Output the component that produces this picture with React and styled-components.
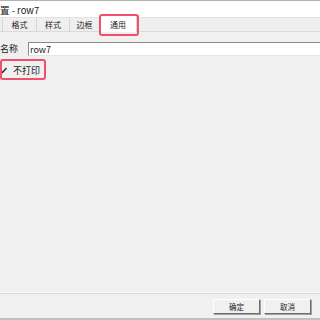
import React from "react";
import styled, { createGlobalStyle } from "styled-components";

const GlobalStyle = createGlobalStyle`
    html, body {
        margin: 0;
        padding: 0;
        width: 320px;
        height: 320px;
        overflow: hidden;
        background: #f0f0f0;
        font-family: "Noto Sans CJK SC", "Liberation Sans", sans-serif;
        font-size: 9px;
        color: #000;
    }
`;

const tabs = [
    { label: "格式", w: 34 },
    { label: "样式", w: 33 },
    { label: "边框", w: 30 },
    { label: "通用", w: 37, active: true },
];

function App() {
    return (
        <Window>
            <GlobalStyle />
            <TitleBar>置 - row7</TitleBar>
            <TabStrip>
                <Tab $w={3} />
                {tabs.map((t) => (
                    <Tab key={t.label} $w={t.w} $active={t.active}>
                        {t.label}
                        {t.active && <Mark $top={-1} $left={-1} $w={40} $h={22} />}
                    </Tab>
                ))}
            </TabStrip>
            <Panel>
                <FieldRow>
                    <Label>名称</Label>
                    <TextInput defaultValue="row7" />
                </FieldRow>
                <CheckRow>
                    <CheckBox>
                        <svg width="7" height="7" viewBox="0 0 7 7">
                            <path d="M0.5 3.5 L2.5 5.5 L6.5 1" fill="none" stroke="#222" strokeWidth="1.3" />
                        </svg>
                    </CheckBox>
                    <span>不打印</span>
                    <Mark $top={-7} $left={-6} $w={46} $h={21} />
                </CheckRow>
            </Panel>
            <Footer>
                <Button>确定</Button>
                <Button>取消</Button>
            </Footer>
            <BottomEdge />
        </Window>
    );
}

export default App;

const Window = styled.div`
    width: 320px;
    height: 320px;
    display: flex;
    flex-direction: column;
    background: #f0f0f0;
    border-top: 1px solid #b4b4b4;
    box-sizing: border-box;
`;

const TitleBar = styled.div`
    height: 16px;
    background: #fff;
    line-height: 18px;
    font-size: 9.5px;
    color: #222;
    white-space: nowrap;
`;

const TabStrip = styled.div`
    height: 13px;
    display: flex;
    background: #efefef;
    border-top: 1px solid #e2e2e2;
    border-bottom: 1px solid #dadada;
`;

const Tab = styled.div`
    position: relative;
    width: ${(p) => p.$w}px;
    flex: none;
    border-right: 1px solid #d6d6d6;
    background: ${(p) => (p.$active ? "#fff" : "transparent")};
    margin-top: ${(p) => (p.$active ? "-3px" : "0")};
    height: ${(p) => (p.$active ? "17px" : "13px")};
    line-height: ${(p) => (p.$active ? "19px" : "14px")};
    text-align: center;
    font-size: 8px;
    color: #222;
    box-sizing: border-box;
`;

const Mark = styled.div`
    position: absolute;
    top: ${(p) => p.$top}px;
    left: ${(p) => p.$left}px;
    width: ${(p) => p.$w}px;
    height: ${(p) => p.$h}px;
    border: 2px solid #f0506a;
    border-radius: 3px;
    box-sizing: border-box;
    pointer-events: none;
`;

const Panel = styled.div`
    flex: 1;
    padding-top: 10px;
    display: flex;
    flex-direction: column;
    border-bottom: 1px solid #fafafa;
`;

const FieldRow = styled.div`
    display: flex;
    align-items: center;
    height: 14px;
`;

const Label = styled.div`
    width: 28px;
    font-size: 9px;
    line-height: 14px;
    color: #222;
`;

const TextInput = styled.input`
    flex: 1;
    height: 14px;
    margin: 0;
    padding: 0 1px;
    border: none;
    border-top: 1px solid #8a8a8a;
    border-left: 1px solid #8a8a8a;
    border-bottom: 1px solid #e6e6e6;
    background: #fff;
    font-family: "Noto Sans CJK SC", "Liberation Sans", sans-serif;
    font-size: 9px;
    color: #222;
    outline: none;
    box-sizing: border-box;
`;

const CheckRow = styled.div`
    position: relative;
    margin-top: 10px;
    margin-left: 6px;
    display: flex;
    align-items: center;
    gap: 6px;
    height: 9px;
    font-size: 9px;
    color: #222;
    width: max-content;
`;

const CheckBox = styled.span`
    display: flex;
    margin-left: -6px;
    width: 7px;
    height: 7px;
`;

const Footer = styled.div`
    height: 24px;
    display: flex;
    justify-content: flex-end;
    align-items: center;
    gap: 4px;
    padding: 0 9px 0 0;
    border-top: 1px solid #d8d8d8;
`;

const Button = styled.div`
    width: 47px;
    height: 15px;
    box-sizing: border-box;
    display: flex;
    align-items: center;
    justify-content: center;
    font-size: 7.5px;
    color: #222;
    background: #f0f0f0;
    border-top: 1px solid #fff;
    border-left: 1px solid #fff;
    border-right: 1px solid #6e6e6e;
    border-bottom: 1px solid #6e6e6e;
    box-shadow: 1px 1px 0 #a0a0a0;
`;

const BottomEdge = styled.div`
    height: 2px;
    background: #c0c0c0;
`;
